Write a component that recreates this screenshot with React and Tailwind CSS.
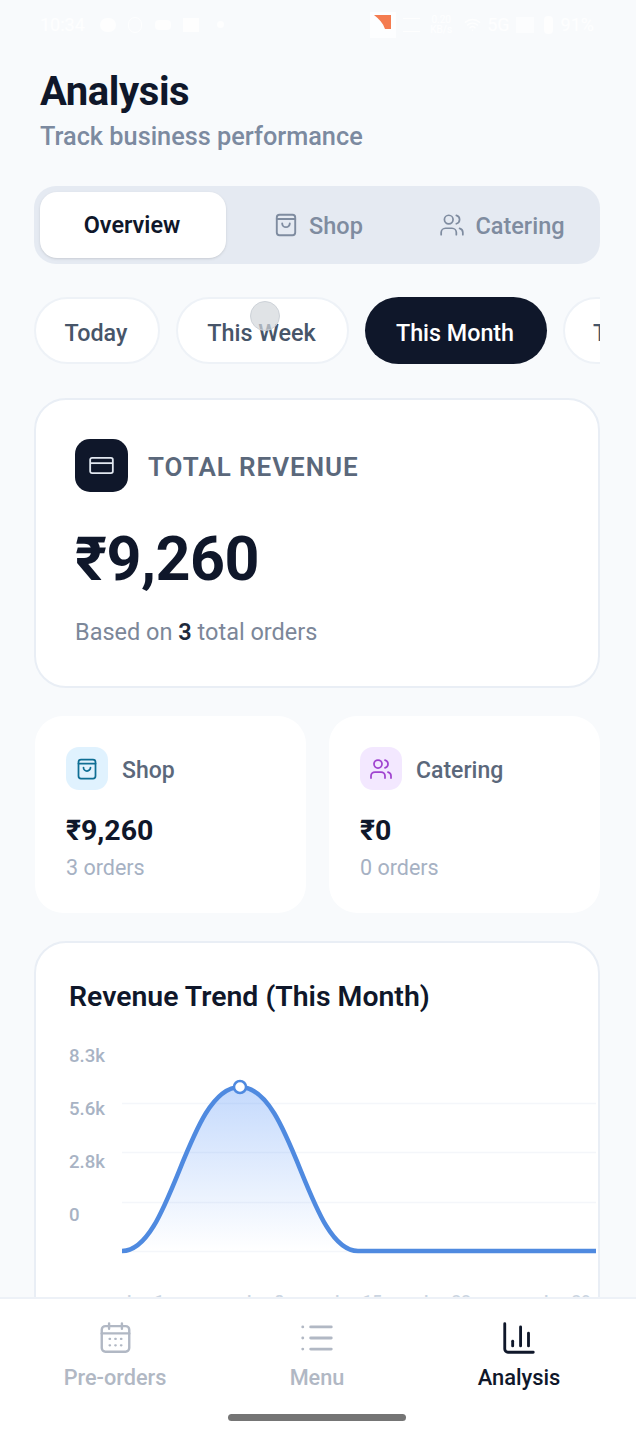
import React from "react";
import { Users, List, ChartColumn, Wifi } from "lucide-react";

const Bag = ({ className }) => (
  <svg viewBox="0 0 24 24" fill="none" stroke="currentColor" strokeWidth="1.75" strokeLinecap="round" strokeLinejoin="round" className={className}>
    <rect x="3.5" y="2.5" width="17" height="19" rx="2.5" />
    <path d="M3.5 6.5h17" />
    <path d="M8.5 10.5a3.5 3.5 0 0 0 7 0" />
  </svg>
);

const Card = ({ className }) => (
  <svg viewBox="0 0 26 18" fill="none" stroke="currentColor" strokeWidth="1.9" className={className}>
    <rect x="1" y="1" width="24" height="16" rx="2" />
    <path d="M1 6.5h24" />
  </svg>
);

const Calendar = ({ className }) => (
  <svg viewBox="0 0 36 36" fill="none" stroke="currentColor" strokeWidth="2.6" strokeLinecap="round" className={className}>
    <rect x="3" y="5" width="30" height="28" rx="4" />
    <path d="M3 13h30" />
    <path d="M11 2v6M25 2v6" />
    <g strokeWidth="2.4">
      <path d="M11.5 19h.6M17.7 19h.6M23.9 19h.6M11.5 26h.6M17.7 26h.6M23.9 26h.6" />
    </g>
  </svg>
);

export default function App() {
  return (
    <div className="w-[636px] h-[1437px] flex flex-col overflow-hidden relative bg-[#f8fafc] font-['Roboto',sans-serif]">
      <main className="flex-1 min-h-0 overflow-hidden">
        <div className="h-[40px] pt-[9px] pl-[40px] pr-[42px] flex items-center justify-between text-[18px] text-white/80">
          <span className="flex items-center">
            <span className="w-[52px]">10:34</span>
            <span className="ml-[8px] w-[16px] h-[14px] rounded-full bg-white/80" />
            <span className="ml-[12px] w-[14px] h-[16px] rounded-full border border-white/80" />
            <span className="ml-[13px] w-[16px] h-[10px] rounded-sm bg-white/80" />
            <span className="ml-[12px] w-[16px] h-[14px] bg-white/80" />
            <span className="ml-[18px] w-[7px] h-[7px] rounded-full bg-white/80" />
          </span>
          <span className="flex items-center">
            <svg width="26" height="26" viewBox="0 0 26 26">
              <rect x="0" y="0" width="26" height="26" fill="#fdfeff" />
              <path d="M4 3H21V17H15C13 11 9 7 4 3Z" fill="#f47c50" />
            </svg>
            <span className="ml-[7px] w-[17px] h-[14px] border-y border-white/80" />
            <span className="ml-[8px] w-[26px] text-[10px] leading-[10px] text-center">0.20<br />KB/s</span>
            <Wifi className="ml-[10px] w-[17px] h-[17px]" />
            <span className="ml-[6px]">5G</span>
            <span className="ml-[6px] w-[18px] h-[16px] bg-white/50" />
            <span className="ml-[10px] w-[9px] h-[18px] rounded-sm bg-white/80" />
            <span className="ml-[8px]">91%</span>
          </span>
        </div>

        <header className="pt-[28px] px-[40px]">
          <h1 className="text-[40px] leading-[48px] font-bold tracking-[-0.4px] text-[#0f172a]">Analysis</h1>
          <p className="mt-[4px] text-[25.3px] leading-[34px] font-medium text-[#7c8aa0]">Track business performance</p>
        </header>

        <div className="mt-[32px] ml-[34px] mr-[36px] h-[78px] p-[6px] rounded-[22px] bg-[#e5eaf2] flex">
          <div className="flex-1 pt-[2px] pr-[2px] rounded-[17px] bg-white flex items-center justify-center text-[23.4px] font-semibold text-[#0f172a] shadow-sm">Overview</div>
          <div className="flex-1 flex items-center justify-center gap-[10px] text-[23.5px] font-medium text-[#7f8ca0]">
            <Bag className="w-[26px] h-[26px]" />
            <span className="pt-[4px]">Shop</span>
          </div>
          <div className="flex-1 flex items-center justify-center gap-[10px] text-[23.5px] font-medium text-[#7f8ca0]">
            <Users className="w-[26px] h-[26px]" strokeWidth={1.6} />
            <span className="pt-[4px]">Catering</span>
          </div>
        </div>

        <div className="mt-[33px] ml-[34px] mr-[36px] flex gap-[16px] overflow-hidden">
          <div className="shrink-0 w-[126px] h-[67px] pt-[6px] pr-[2px] rounded-full bg-white border-2 border-[#eef2f7] flex items-center justify-center text-[23.3px] font-medium text-[#475569]">Today</div>
          <div className="shrink-0 w-[173px] h-[67px] pt-[6px] pr-[2px] rounded-full bg-white border-2 border-[#eef2f7] flex items-center justify-center text-[23.4px] font-medium text-[#475569]">This Week</div>
          <div className="shrink-0 w-[182px] h-[67px] pt-[6px] pr-[2px] rounded-full bg-[#0f172a] flex items-center justify-center text-[23.3px] font-medium text-white">This Month</div>
          <div className="shrink-0 w-[126px] h-[67px] pt-[6px] rounded-full bg-white border-2 border-[#eef2f7] flex items-center pl-[28px] whitespace-nowrap text-[23.4px] font-medium text-[#475569]">This Year</div>
        </div>

        <section className="mt-[34px] ml-[34px] mr-[36px] h-[290px] rounded-[32px] bg-white border-2 border-[#e9eef5] pt-[39px] pl-[39px]">
          <div className="flex items-center gap-[20px]">
            <div className="w-[53px] h-[53px] rounded-[15px] bg-[#0f172a] flex items-center justify-center text-[#e2e8f0]">
              <Card className="w-[25px] h-[17px]" />
            </div>
            <span className="pt-[3px] text-[26px] font-semibold tracking-[0.95px] text-[#5b687b]">TOTAL REVENUE</span>
          </div>
          <div className="mt-[29px] text-[61px] leading-[76px] font-bold tracking-[-0.5px] text-[#0f172a]">₹9,260</div>
          <p className="mt-[20px] text-[23.5px] leading-[30px] text-[#7c8799]">
            Based on <span className="font-semibold text-[#1e293b]">3</span> total orders
          </p>
        </section>

        <div className="mt-[28px] ml-[35px] mr-[36px] grid grid-cols-2 gap-[23px]">
          <div className="h-[197px] rounded-[28px] bg-white pt-[31px] pl-[31px]">
            <div className="flex items-center gap-[14px]">
              <div className="w-[42px] h-[43px] rounded-[13px] bg-[#e0f2fe] flex items-center justify-center text-[#0e6e94]">
                <Bag className="w-[24px] h-[24px]" />
              </div>
              <span className="pt-[5px] text-[23px] font-medium text-[#5b687b]">Shop</span>
            </div>
            <div className="mt-[22px] text-[28.5px] leading-[38px] font-bold text-[#0f172a]">₹9,260</div>
            <div className="mt-[3px] text-[21.5px] leading-[30px] text-[#a6b1c3]">3 orders</div>
          </div>
          <div className="h-[197px] rounded-[28px] bg-white pt-[31px] pl-[31px]">
            <div className="flex items-center gap-[14px]">
              <div className="w-[42px] h-[43px] rounded-[13px] bg-[#f3e8ff] flex items-center justify-center text-[#a044d0]">
                <Users className="w-[24px] h-[24px]" strokeWidth={1.75} />
              </div>
              <span className="pt-[5px] text-[23px] font-medium text-[#5b687b]">Catering</span>
            </div>
            <div className="mt-[22px] text-[28.5px] leading-[38px] font-bold text-[#0f172a]">₹0</div>
            <div className="mt-[3px] text-[21.5px] leading-[30px] text-[#a6b1c3]">0 orders</div>
          </div>
        </div>

        <section className="mt-[28px] ml-[34px] mr-[36px] h-[420px] rounded-[32px] bg-white border-2 border-[#e9eef5] pt-[36px] pl-[33px]">
          <h2 className="text-[28.4px] leading-[36px] font-semibold text-[#0f172a]">Revenue Trend (This Month)</h2>
          <div className="mt-[26px] flex">
            <div className="w-[53px] -mt-[11px] shrink-0 flex flex-col text-[18.6px] leading-[53px] font-medium text-[#a8b3c4]">
              <span>8.3k</span>
              <span>5.6k</span>
              <span>2.8k</span>
              <span>0</span>
            </div>
            <svg width="474" height="280" viewBox="0 0 474 280" className="shrink-0">
              <defs>
                <linearGradient id="area" x1="0" y1="0" x2="0" y2="1">
                  <stop offset="0" stopColor="#3b82f6" stopOpacity="0.3" />
                  <stop offset="1" stopColor="#3b82f6" stopOpacity="0" />
                </linearGradient>
              </defs>
              <g stroke="#f4f6fa" strokeWidth="1.5">
                <path d="M0 62.5H474" />
                <path d="M0 111.5H474" />
                <path d="M0 161.5H474" />
                <path d="M0 210.5H474" />
              </g>
              <path d="M0 210C50 210 65 46 118 46C171 46 186 210 236 210L474 210V210H0Z" fill="url(#area)" />
              <path d="M0 210C50 210 65 46 118 46C171 46 186 210 236 210L474 210" fill="none" stroke="#4f8ae0" strokeWidth="4.5" />
              <circle cx="118" cy="46" r="6" fill="#ffffff" stroke="#4f8ae0" strokeWidth="2.5" />
              <g fontSize="17" fontWeight="500" fill="#cbd5e1">
                <text x="0" y="266">Jun 1</text>
                <text x="120" y="266">Jun 8</text>
                <text x="208" y="266">Jun 15</text>
                <text x="297" y="266">Jun 22</text>
                <text x="417" y="266">Jun 29</text>
              </g>
            </svg>
          </div>
        </section>
      </main>

      <nav className="relative h-[140px] shrink-0 bg-white border-t-2 border-[#edf1f7] pl-[14px] pr-[16px] pt-[21px]">
        <div className="grid grid-cols-3">
          <div className="flex flex-col items-center text-[#b1b8c4]">
            <Calendar className="w-[33px] h-[36px]" />
            <span className="mt-[7px] text-[21.7px] leading-[30px] font-medium">Pre-orders</span>
          </div>
          <div className="flex flex-col items-center text-[#b1b8c4]">
            <List className="w-[38px] h-[38px] -my-[1px]" strokeWidth={1.8} />
            <span className="mt-[7px] text-[21.7px] leading-[30px] font-medium">Menu</span>
          </div>
          <div className="flex flex-col items-center text-[#0f172a]">
            <ChartColumn className="w-[38px] h-[38px] -my-[1px]" strokeWidth={1.8} />
            <span className="mt-[7px] text-[21.9px] leading-[30px] font-medium">Analysis</span>
          </div>
        </div>
        <div className="mt-[21px] mx-auto w-[178px] h-[7px] rounded-full bg-[#757575]" />
      </nav>

      <div className="absolute left-[250px] top-[301px] w-[30px] h-[30px] rounded-full bg-[#d3d7dc]/70 border border-[#cdd2d8]" />
    </div>
  );
}
